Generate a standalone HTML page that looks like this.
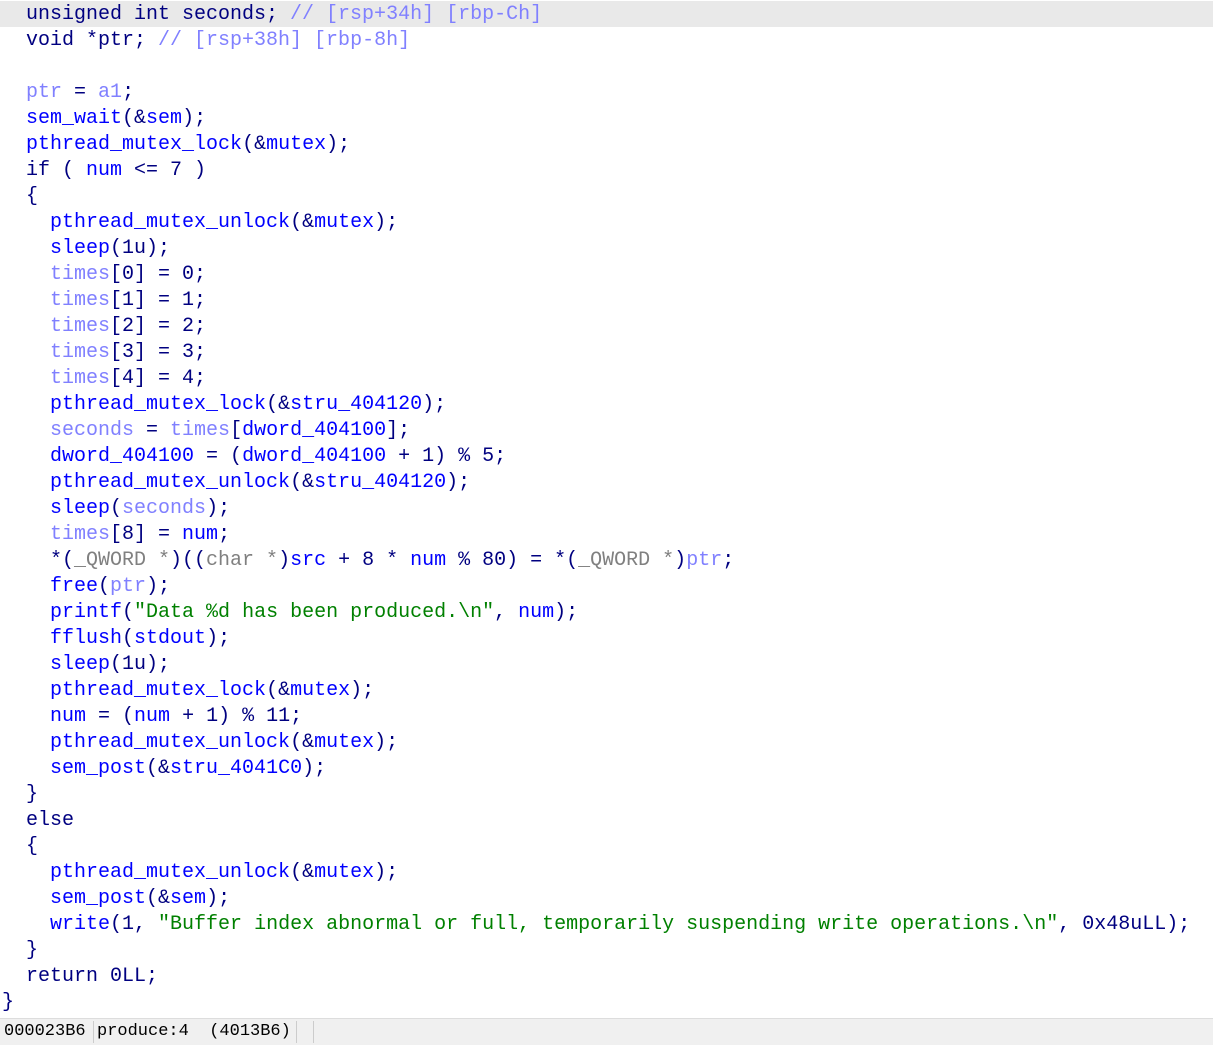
<!DOCTYPE html>
<html><head><meta charset="utf-8"><style>
html,body{margin:0;padding:0;background:#fff;width:1213px;height:1044px;overflow:hidden}
.code{position:absolute;left:2px;top:2px;font-family:"Liberation Mono",monospace;font-size:20px;line-height:26px;color:#000080}
.l{height:26px;white-space:pre}
.hl{position:absolute;left:0;top:1px;width:1213px;height:26px;background:#e9e9e9}
.f{color:#0000ff}.v{color:#8080ff}.s{color:#008000}.c{color:#8080ff}.g{color:#808080}.k{color:#000080}
.status{position:absolute;left:0;top:1018px;width:1213px;height:26px;background:#f0f0f0;border-top:1px solid #ddd;font-family:"Liberation Mono",monospace;font-size:17px;line-height:25px;color:#000}
.status span{position:absolute;top:0;white-space:pre}
.sep{position:absolute;top:2px;width:1px;height:22px;background:#ccc}
</style></head><body>
<div class="hl"></div>
<div class="code"><div class="l">  unsigned int seconds; <span class="c">// [rsp+34h] [rbp-Ch]</span></div><div class="l">  void *ptr; <span class="c">// [rsp+38h] [rbp-8h]</span></div><div class="l"> </div><div class="l">  <span class="v">ptr</span> = <span class="v">a1</span>;</div><div class="l">  <span class="f">sem_wait</span>(&amp;<span class="f">sem</span>);</div><div class="l">  <span class="f">pthread_mutex_lock</span>(&amp;<span class="f">mutex</span>);</div><div class="l">  if ( <span class="f">num</span> &lt;= 7 )</div><div class="l">  {</div><div class="l">    <span class="f">pthread_mutex_unlock</span>(&amp;<span class="f">mutex</span>);</div><div class="l">    <span class="f">sleep</span>(1u);</div><div class="l">    <span class="v">times</span>[0] = 0;</div><div class="l">    <span class="v">times</span>[1] = 1;</div><div class="l">    <span class="v">times</span>[2] = 2;</div><div class="l">    <span class="v">times</span>[3] = 3;</div><div class="l">    <span class="v">times</span>[4] = 4;</div><div class="l">    <span class="f">pthread_mutex_lock</span>(&amp;<span class="f">stru_404120</span>);</div><div class="l">    <span class="v">seconds</span> = <span class="v">times</span>[<span class="f">dword_404100</span>];</div><div class="l">    <span class="f">dword_404100</span> = (<span class="f">dword_404100</span> + 1) % 5;</div><div class="l">    <span class="f">pthread_mutex_unlock</span>(&amp;<span class="f">stru_404120</span>);</div><div class="l">    <span class="f">sleep</span>(<span class="v">seconds</span>);</div><div class="l">    <span class="v">times</span>[8] = <span class="f">num</span>;</div><div class="l">    *(<span class="g">_QWORD *</span>)((<span class="g">char *</span>)<span class="f">src</span> + 8 * <span class="f">num</span> % 80) = *(<span class="g">_QWORD *</span>)<span class="v">ptr</span>;</div><div class="l">    <span class="f">free</span>(<span class="v">ptr</span>);</div><div class="l">    <span class="f">printf</span>(<span class="s">"Data %d has been produced.\n"</span>, <span class="f">num</span>);</div><div class="l">    <span class="f">fflush</span>(<span class="f">stdout</span>);</div><div class="l">    <span class="f">sleep</span>(1u);</div><div class="l">    <span class="f">pthread_mutex_lock</span>(&amp;<span class="f">mutex</span>);</div><div class="l">    <span class="f">num</span> = (<span class="f">num</span> + 1) % 11;</div><div class="l">    <span class="f">pthread_mutex_unlock</span>(&amp;<span class="f">mutex</span>);</div><div class="l">    <span class="f">sem_post</span>(&amp;<span class="f">stru_4041C0</span>);</div><div class="l">  }</div><div class="l">  else</div><div class="l">  {</div><div class="l">    <span class="f">pthread_mutex_unlock</span>(&amp;<span class="f">mutex</span>);</div><div class="l">    <span class="f">sem_post</span>(&amp;<span class="f">sem</span>);</div><div class="l">    <span class="f">write</span>(1, <span class="s">"Buffer index abnormal or full, temporarily suspending write operations.\n"</span>, 0x48uLL);</div><div class="l">  }</div><div class="l">  return 0LL;</div><div class="l">}</div></div>
<div class="status">
<span style="left:4px">000023B6</span>
<div class="sep" style="left:93px"></div>
<span style="left:97px">produce:4  (4013B6)</span>
<div class="sep" style="left:296px"></div>
<div class="sep" style="left:313px"></div>
</div>
</body></html>
